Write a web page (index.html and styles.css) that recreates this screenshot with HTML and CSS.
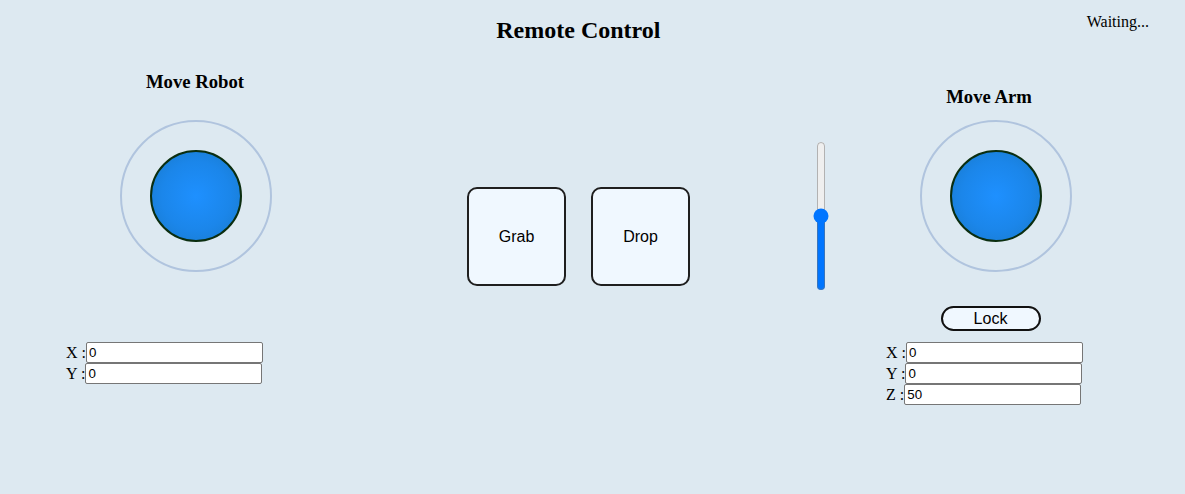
FILE: index.html
```html
<!DOCTYPE html>
<html lang="en">
<head>
<meta charset="utf-8">
<title>Remote Control</title>
<link rel="stylesheet" href="styles.css">
</head>
<body>
<header class="header">
  <h1 class="title">Remote Control</h1>
  <div class="status">Waiting...</div>
</header>
<main class="main">
  <section class="panel panel-robot">
    <h3 class="panel-title">Move Robot</h3>
    <div class="joystick">
      <div class="knob"></div>
    </div>
    <div class="coords coords-robot">
      <div class="coord-row">X :<input class="coord-input" type="text" value="0"></div>
      <div class="coord-row">Y :<input class="coord-input" type="text" value="0"></div>
    </div>
  </section>

  <section class="actions">
    <button class="action-btn">Grab</button>
    <button class="action-btn">Drop</button>
  </section>

  <div class="slider-wrap">
    <input class="slider" type="range" min="0" max="100" value="50">
  </div>

  <section class="panel panel-arm">
    <h3 class="panel-title">Move Arm</h3>
    <div class="joystick joystick-arm">
      <div class="knob"></div>
    </div>
    <button class="lock-btn">Lock</button>
    <div class="coords coords-arm">
      <div class="coord-row">X :<input class="coord-input" type="text" value="0"></div>
      <div class="coord-row">Y :<input class="coord-input" type="text" value="0"></div>
      <div class="coord-row">Z :<input class="coord-input" type="text" value="50"></div>
    </div>
  </section>
</main>
</body>
</html>
```

FILE: styles.css
```css
* {
  box-sizing: border-box;
}

html, body {
  margin: 0;
  padding: 0;
}

body {
  width: 1185px;
  height: 494px;
  background: #dde9f1;
  font-family: "Liberation Serif", "Times New Roman", serif;
  font-size: 16px;
  color: #000;
  overflow: hidden;
}

.header {
  display: flex;
  align-items: flex-start;
  height: 44px;
  padding-top: 13px;
}

.title {
  flex: 1;
  margin: 4px 0 0 70px;
  font-size: 24px;
  font-weight: bold;
  line-height: 27px;
  text-align: center;
}

.status {
  margin-right: 36px;
  font-size: 16px;
  line-height: 18px;
}

.main {
  display: flex;
  align-items: flex-start;
}

.panel {
  display: flex;
  flex-direction: column;
  align-items: center;
  width: 300px;
}

.panel-robot {
  margin-left: 45px;
  padding-top: 27px;
}

.panel-arm {
  margin-left: 10px;
  padding-top: 42px;
}

.panel-title {
  margin: 0;
  font-size: 18.72px;
  font-weight: bold;
  line-height: 22px;
}

.joystick {
  display: flex;
  align-items: center;
  justify-content: center;
  width: 152px;
  height: 152px;
  margin-top: 27px;
  margin-left: 2px;
  border: 2px solid #b0c4de;
  border-radius: 50%;
}

.joystick-arm {
  margin-top: 12px;
  margin-left: 14px;
}

.knob {
  width: 92px;
  height: 92px;
  border: 2px solid #0b2e10;
  border-radius: 50%;
  background: radial-gradient(circle at center, #1e90ff 0%, #1b86ea 55%, #1878c9 100%);
}

.coords {
  align-self: flex-start;
  display: flex;
  flex-direction: column;
}

.coords-robot {
  margin-top: 70px;
  margin-left: 21px;
}

.coords-arm {
  margin-top: 11px;
  margin-left: 47px;
}

.coord-row {
  display: flex;
  align-items: center;
  height: 21px;
  font-size: 16px;
  white-space: pre;
}

.coord-input {
  width: 177px;
  height: 21px;
  margin: 0;
  padding: 1px 2px;
  border: 1px solid #767676;
  border-radius: 2px;
  background: #fff;
  font-family: "Liberation Sans", Arial, sans-serif;
  font-size: 13.33px;
  color: #000;
}

.actions {
  display: flex;
  gap: 25px;
  margin-left: 122px;
  margin-top: 143px;
}

.action-btn {
  width: 99px;
  height: 99px;
  padding: 0;
  border: 2px solid #1f1f1f;
  border-radius: 10px;
  background: #f0f8ff;
  font-family: "Liberation Sans", Arial, sans-serif;
  font-size: 16px;
  color: #000;
}

.slider-wrap {
  margin-left: 123px;
  margin-top: 97px;
  width: 16px;
  height: 150px;
}

.slider {
  margin: 0;
  width: 16px;
  height: 150px;
  writing-mode: vertical-lr;
  direction: rtl;
  accent-color: #0075ff;
}

.lock-btn {
  width: 100px;
  height: 25px;
  margin-top: 34px;
  margin-left: 3px;
  padding: 0;
  border: 2px solid #111;
  border-radius: 13px;
  background: #f0f8ff;
  font-family: "Liberation Sans", Arial, sans-serif;
  font-size: 16px;
  color: #000;
}
```
